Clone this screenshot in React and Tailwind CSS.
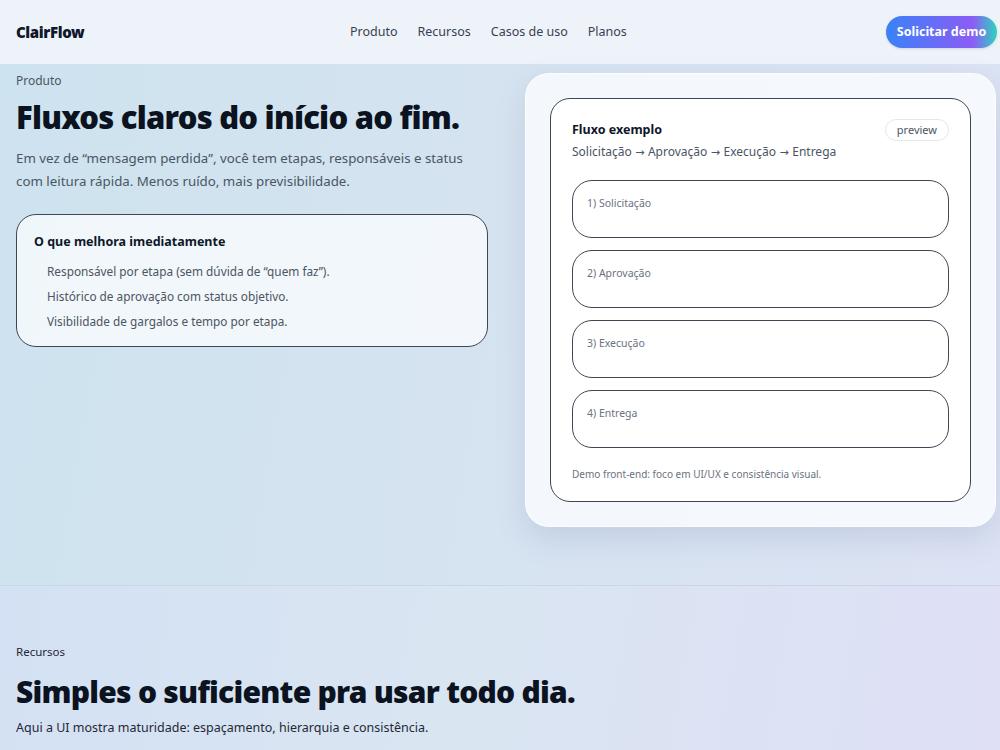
import React from "react";

const steps = ["1) Solicitação", "2) Aprovação", "3) Execução", "4) Entrega"];

const perks = [
  "Responsável por etapa (sem dúvida de “quem faz”).",
  "Histórico de aprovação com status objetivo.",
  "Visibilidade de gargalos e tempo por etapa.",
];

const flow = ["Solicitação", "Aprovação", "Execução", "Entrega"];

export default function App() {
  return (
    <div
      className="min-h-[750px] text-slate-900 bg-[linear-gradient(100deg,#cde3ef_0%,#d5e3f0_45%,#dde3f4_100%)]"
      style={{ fontFamily: '"Noto Sans", "Open Sans", sans-serif' }}
    >
      {/* top bar */}
      <header className="h-16 flex items-center pl-4 pr-[3px] bg-[#eef3fa]">
        <span className="w-[334px] text-[15px] font-black tracking-tight text-[#0f172a]">ClairFlow</span>
        <nav className="flex items-center gap-[20px] text-[12.5px] text-[#374151]">
          <a>Produto</a>
          <a>Recursos</a>
          <a>Casos de uso</a>
          <a>Planos</a>
        </nav>
        <button className="ml-auto h-8 w-[111px] rounded-full text-white text-[12.5px] font-bold bg-[linear-gradient(90deg,#3b82f6,#8b5cf6_78%,#2dd4bf)] shadow-sm">
          Solicitar demo
        </button>
      </header>

      {/* hero */}
      <section className="grid grid-cols-[472px_471px] gap-[37px] pl-4 pt-[9px] pb-[58px] border-b border-[#c9d6e3]">
        <div>
          <p className="text-[12px] leading-4 text-[#4b5563]">Produto</p>
          <h1 className="mt-[10px] text-[31px] leading-[37px] font-black tracking-tight text-[#0b1220]">
            Fluxos claros do início ao fim.
          </h1>
          <p className="mt-[11px] text-[13.3px] leading-[23px] text-[#4b5563]">
            Em vez de “mensagem perdida”, você tem etapas, responsáveis e status com leitura rápida. Menos ruído, mais previsibilidade.
          </p>

          <div className="mt-[21px] rounded-[20px] border border-[#3f4654] bg-white/70 px-[17px] pt-[18px] pb-4">
            <h3 className="text-[12.5px] leading-[18px] font-bold text-[#0f172a]">O que melhora imediatamente</h3>
            <ul className="mt-[11px] pl-[13px] flex flex-col gap-[7px] text-[11.8px] leading-[18px] text-[#4b5563]">
              {perks.map((p) => (
                <li key={p}>{p}</li>
              ))}
            </ul>
          </div>
        </div>

        <div className="rounded-[24px] border border-white/70 bg-[#f7f9fd]/90 p-6 shadow-[0_12px_30px_rgba(100,116,160,0.18)]">
          <div className="rounded-[20px] border border-[#3f4654] bg-white px-[21px] pt-[22px] pb-[20px]">
            <div className="flex items-start justify-between">
              <div>
                <h3 className="text-[12.5px] leading-[18px] font-bold text-[#0f172a]">Fluxo exemplo</h3>
                <p className="mt-[4px] text-[12px] leading-[18px] text-[#4b5563]">
                  {flow.map((f, i) => (
                    <React.Fragment key={f}>
                      {i > 0 && (
                        <span className="text-[11px]" style={{ fontFamily: '"DejaVu Sans", sans-serif' }}>
                          {" → "}
                        </span>
                      )}
                      {f}
                    </React.Fragment>
                  ))}
                </p>
              </div>
              <span className="-mt-[2px] h-[22px] px-[11px] rounded-full border border-[#e5e7eb] text-[11px] leading-[20px] text-[#4b5563]">
                preview
              </span>
            </div>

            <div className="mt-[18px] flex flex-col gap-3">
              {steps.map((s) => (
                <div key={s} className="h-[58px] rounded-[20px] border border-[#3f4654] px-[14px] pt-[14px]">
                  <p className="text-[10.5px] leading-4 text-[#6b7280]">{s}</p>
                </div>
              ))}
            </div>

            <p className="mt-[19px] text-[10px] leading-[14px] text-[#6b7280]">
              Demo front-end: foco em UI/UX e consistência visual.
            </p>
          </div>
        </div>
      </section>

      {/* recursos */}
      <section className="pl-4 pt-[58px] pb-4 bg-[linear-gradient(100deg,#d4e1f4_0%,#d9e5f1_45%,#dfe0f6_100%)]">
        <p className="text-[11.5px] leading-4 text-[#1f2937]">Recursos</p>
        <h2 className="mt-[14px] text-[30px] leading-[36px] font-black tracking-tight text-[#0b1220]">
          Simples o suficiente pra usar todo dia.
        </h2>
        <p className="mt-[9px] text-[12.5px] leading-[18px] text-[#1f2937]">
          Aqui a UI mostra maturidade: espaçamento, hierarquia e consistência.
        </p>
      </section>
    </div>
  );
}
